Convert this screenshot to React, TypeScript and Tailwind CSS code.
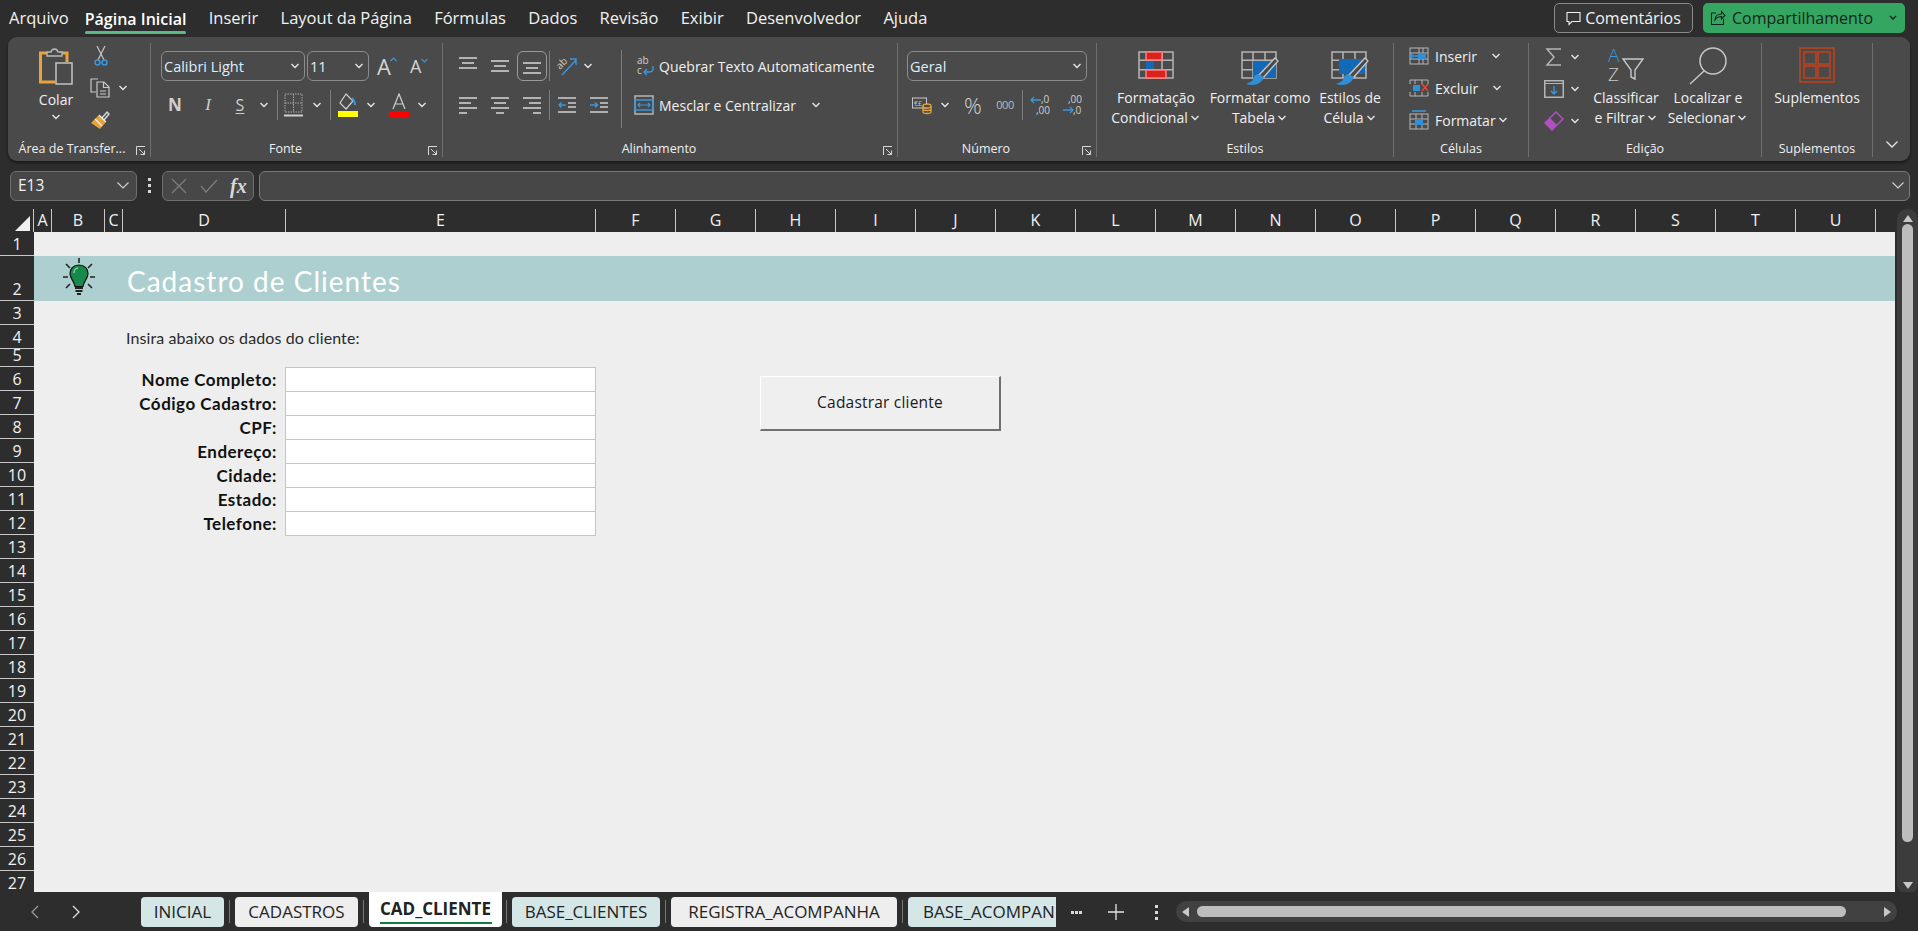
import type { ReactNode } from "react";

const UI = "font-['Open_Sans',sans-serif]";
const CELL = "font-['Lato',sans-serif]";

const menu = ["Arquivo", "Página Inicial", "Inserir", "Layout da Página", "Fórmulas", "Dados", "Revisão", "Exibir", "Desenvolvedor", "Ajuda"];

const columns = [
  { name: "A", w: "w-[18px]" },
  { name: "B", w: "w-[53px]" },
  { name: "C", w: "w-[18px]" },
  { name: "D", w: "w-[163px]" },
  { name: "E", w: "w-[310px]" },
  ...["F", "G", "H", "I", "J", "K", "L", "M", "N", "O", "P", "Q", "R", "S", "T", "U"].map((name) => ({ name, w: "w-[80px]" })),
];

const rows = [
  { n: 1, h: "h-[24px]" },
  { n: 2, h: "h-[45px]" },
  { n: 3, h: "h-[24px]" },
  { n: 4, h: "h-[24px]" },
  { n: 5, h: "h-[18px]" },
  ...Array.from({ length: 22 }, (_, i) => ({ n: i + 6, h: "h-[24px]" })),
];

const fields = ["Nome Completo:", "Código Cadastro:", "CPF:", "Endereço:", "Cidade:", "Estado:", "Telefone:"];

function Chev({ className = "" }: { className?: string }) {
  return (
    <svg width="12" height="8" viewBox="0 0 12 8" className={`shrink-0 ${className}`} fill="none" stroke="#e6e6e6" strokeWidth="1.4">
      <path d="M2.5 2 6 5.5 9.5 2" />
    </svg>
  );
}

function Launcher() {
  return (
    <svg width="10" height="10" viewBox="0 0 10 10" fill="none" stroke="#d8d8d8" strokeWidth="1">
      <path d="M.5 9V.5H9" />
      <path d="M3 3l5.5 5.5M8.5 4.5v4h-4" />
    </svg>
  );
}

function Sep({ className = "" }: { className?: string }) {
  return <div className={`h-[30px] w-px shrink-0 bg-[#7d7d7d] ${className}`} />;
}

function Group({ w, label, launcher, labelPad = "", children }: { w: string; label: string; launcher?: boolean; labelPad?: string; children: ReactNode }) {
  return (
    <div className={`flex h-[114px] shrink-0 flex-col border-r border-[#6f6f6f] ${w}`}>
      <div className="flex h-[99px]">{children}</div>
      <div className="flex h-[15px] items-center text-[12.5px] text-[#f0f0f0]">
        <span className={`flex-1 text-center whitespace-nowrap ${launcher ? "pr-[4px]" : ""} ${labelPad}`}>{label}</span>
        {launcher && (
          <span className="flex w-[18px] shrink-0 justify-center pt-[2px]">
            <Launcher />
          </span>
        )}
      </div>
    </div>
  );
}

function Combo({ w, ml, text }: { w: string; ml: string; text: string }) {
  return (
    <div className={`flex h-[30px] shrink-0 items-center justify-between rounded-md border border-[#8c8c8c] pl-[2px] pr-[3px] text-[14.5px] text-[#ddeeff] ${w} ${ml}`}>
      <span className="whitespace-nowrap pt-[1px]">{text}</span>
      <Chev />
    </div>
  );
}

function BigButton({ w, icon, top, lines, chev }: { w: string; icon: ReactNode; top: string; lines: string[]; chev?: boolean }) {
  return (
    <div className={`flex shrink-0 flex-col items-center text-[14px] leading-[20px] text-[#f0f0f0] ${w}`}>
      <div className={`flex h-[45px] w-full justify-center ${top}`}>{icon}</div>
      {lines.map((line, i) => (
        <div key={line} className="flex items-center whitespace-nowrap">
          {line}
          {chev && i === lines.length - 1 && <Chev className="ml-[1px]" />}
        </div>
      ))}
    </div>
  );
}

function AlignLines({ lines }: { lines: number[][] }) {
  return (
    <svg width="18" height="18" viewBox="0 0 18 18" stroke="#cfcfcf" strokeWidth="1.6" className="shrink-0">
      {lines.map(([x1, x2, y]) => (
        <line key={y} x1={x1} x2={x2} y1={y} y2={y} />
      ))}
    </svg>
  );
}

function Indent({ right }: { right?: boolean }) {
  return (
    <svg width="18" height="18" viewBox="0 0 18 18" fill="none" className="shrink-0">
      <path d="M0 2h18M0 16h18" stroke="#cfcfcf" strokeWidth="1.6" />
      <path d="M10 7h8M10 11h8" stroke="#cfcfcf" strokeWidth="1.6" />
      <path d={right ? "M0 9h7M5 6.5 7.5 9 5 11.5" : "M8 9H1M3.5 6.5 1 9l2.5 2.5"} stroke="#3a96dd" strokeWidth="1.5" />
    </svg>
  );
}

function GridBox({ children, w = 36, h = 28 }: { children?: ReactNode; w?: number; h?: number }) {
  const cw = w / 3;
  const ch = h / 3;
  return (
    <g fill="none" stroke="#b5b5b5" strokeWidth="1.5">
      <rect x="1" y="1" width={w - 2} height={h - 2} />
      <path d={`M${cw} 1V${h - 1}M${cw * 2} 1V${h - 1}M1 ${ch}H${w - 1}M1 ${ch * 2}H${w - 1}`} />
      {children}
    </g>
  );
}

function Brush() {
  return (
    <g>
      <path d="M18 24 34 7l3 3-15 17z" fill="#4a4a4a" stroke="#c8c8c8" strokeWidth="1.3" />
      <path d="M17 23c-5 1-4 5-6 7-2 1-6 3-6 3 7 2 15 1 18-7z" fill="#2f8fd8" />
    </g>
  );
}

function BulbIcon() {
  return (
    <svg width="32" height="40" viewBox="0 0 32 40" className="absolute left-[29px] top-[2px]">
      <path d="M16 0v5M3 6l4 4M29 6l-4 4M0 19h5M27 19h5M7 26l-4 4M25 26l4 4" stroke="#222" strokeWidth="1.6" />
      <path d="M16 7c-6 0-9 4-9 8.500 0 5 4 7 5 13h8c1-6 5-8 5-13C25 11 22 7 16 7z" fill="#168a4a" stroke="#111" strokeWidth="1.2" />
      <path d="M11 15c0-3 2-5 4-5" stroke="#8fd0a8" strokeWidth="1.4" fill="none" />
      <path d="M12 30h8M12.500 33h7M14 36h4" stroke="#222" strokeWidth="2" />
    </svg>
  );
}

function MenuBar() {
  return (
    <div className="flex h-[37px] items-start justify-between bg-[#2d2d2d] pr-[13px]">
      <div className="flex h-[37px] pl-[9px] text-[16.5px] text-[#f2f2f2]">
        {menu.map((item, i) => (
          <div key={item} className={`relative flex h-[37px] items-center whitespace-nowrap ${i === 0 ? "mr-[16px]" : "mr-[22.3px]"} ${i === 1 ? "text-[16px] font-semibold text-white" : ""}`}>
            {item}
            {i === 1 && <span className="absolute bottom-[3px] left-0 h-[3px] w-full rounded-sm bg-[#5fb784]" />}
          </div>
        ))}
      </div>
      <div className="flex gap-[10px] pt-[3px]">
        <div className="flex h-[30px] w-[139px] items-center justify-center gap-[4px] rounded-[5px] border border-[#8a8a8a] bg-[#363636] text-[16px] text-[#f2f2f2]">
          <svg width="15" height="15" viewBox="0 0 15 15" fill="none" stroke="#f0f0f0" strokeWidth="1.1">
            <path d="M1 1.500h13v9H6l-3 3v-3H1z" />
          </svg>
          Comentários
        </div>
        <div className="flex h-[30px] w-[202px] items-center justify-between rounded-[5px] bg-[#35a562] pl-[7px] pr-[6px] text-[16px] text-[#14251b]">
          <span className="flex items-center gap-[6px] whitespace-nowrap">
            <svg width="16" height="16" viewBox="0 0 16 16" fill="none" stroke="#14251b" strokeWidth="1.1">
              <path d="M6 3H1.500v11.500h12V9" />
              <path d="M5 10c0-4 3-6 6.500-6V1.500L15 5.500 11.500 9V6.500C9 6.500 6.500 7.500 5 10z" />
            </svg>
            Compartilhamento
          </span>
          <svg width="12" height="8" viewBox="0 0 12 8" fill="none" stroke="#14251b" strokeWidth="1.4">
            <path d="M3 2l3 3 3-3" />
          </svg>
        </div>
      </div>
    </div>
  );
}

function ClipboardGroup() {
  return (
    <Group w="w-[143px]" label="Área de Transfer..." labelPad="pl-[8px]" launcher>
      <div className="ml-[12px] flex w-[72px] flex-col items-center pt-[4px] text-[14px] text-[#f0f0f0]">
        <svg width="34" height="38" viewBox="0 0 34 38" fill="none">
          <path d="M8 6H1.500v29H16M21 6h7v9" stroke="#e8a33c" strokeWidth="3" />
          <path d="M8 9V5h4c1-4 6-4 7 0h4v4z" fill="#4a4a4a" stroke="#b9b9b9" strokeWidth="1.3" />
          <rect x="17" y="16" width="16" height="21" fill="#4a4a4a" stroke="#c4c4c4" strokeWidth="1.5" />
        </svg>
        <span className="mt-[5px] leading-[20px]">Colar</span>
        <Chev className="mt-[3px]" />
      </div>
      <div className="-ml-[2px] flex flex-col pt-[3px]">
        <svg width="14" height="20" viewBox="0 0 14 20" fill="none" className="ml-[4px]">
          <path d="M3 0l7 14M11 0 4 14" stroke="#c8c8c8" strokeWidth="1.2" />
          <circle cx="3.500" cy="16.500" r="2.500" stroke="#3a96dd" strokeWidth="1.5" />
          <circle cx="10.500" cy="16.500" r="2.500" stroke="#3a96dd" strokeWidth="1.5" />
        </svg>
        <div className="mt-[12px] flex items-center">
          <svg width="20" height="20" viewBox="0 0 20 20" fill="none" stroke="#c8c8c8" strokeWidth="1.2">
            <path d="M8 1H1v13h5" />
            <path d="M7 4h7l5 5v10H7z" fill="#4a4a4a" />
            <path d="M13.500 4v5.500H19M10 13h6M10 16h6" />
          </svg>
          <Chev className="ml-[7px]" />
        </div>
        <svg width="20" height="20" viewBox="0 0 20 20" fill="none" className="mt-[12px]">
          <path d="M12 8 17 2l2 2-5 6" stroke="#d8d8d8" strokeWidth="1.5" />
          <path d="M9 5l7 7-6 7-9-6z" fill="#e8a33c" />
          <path d="M9 5l7 7M5 9l7 7" stroke="#f0f0f0" strokeWidth="1.2" />
        </svg>
      </div>
    </Group>
  );
}

function FontGroup() {
  return (
    <Group w="w-[292px]" label="Fonte" launcher>
      <div className="flex flex-col pt-[8px]">
        <div className="flex h-[30px] items-center">
          <Combo w="w-[144px]" ml="ml-[10px]" text="Calibri Light" />
          <Combo w="w-[62px]" ml="ml-[2px]" text="11" />
          <span className="ml-[8px] flex w-[20px] items-start text-[22px] leading-none text-[#d4d4d4]">
            A
            <svg width="7" height="5" viewBox="0 0 7 5" fill="none" stroke="#3a96dd" strokeWidth="1.2" className="-ml-[1px] mt-[2px] shrink-0">
              <path d="M.5 4 3.500 1l3 3" />
            </svg>
          </span>
          <span className="ml-[13px] flex w-[19px] items-start text-[18px] leading-none text-[#d4d4d4]">
            A
            <svg width="7" height="5" viewBox="0 0 7 5" fill="none" stroke="#3a96dd" strokeWidth="1.2" className="mt-[1px] shrink-0">
              <path d="M.5 1l3 3 3-3" />
            </svg>
          </span>
        </div>
        <div className="mt-[9px] flex h-[30px] items-center text-[#cfcfcf]">
          <span className="ml-[14px] w-[20px] text-center text-[17px] font-bold">N</span>
          <span className="ml-[13px] w-[20px] text-center font-['Liberation_Serif',serif] text-[17px] italic">I</span>
          <span className="ml-[12px] w-[20px] text-center text-[16px] underline underline-offset-2">S</span>
          <Chev className="ml-[8px]" />
          <Sep className="ml-[7px]" />
          <svg width="19" height="24" viewBox="0 0 19 24" fill="none" className="ml-[6px] shrink-0" stroke="#a9a9a9" strokeDasharray="1.500 1">
            <rect x="1" y="1" width="17" height="18" />
            <path d="M9.500 1v18M1 10h17" />
            <path d="M0 22.500h19" stroke="#d0d0d0" strokeWidth="2" strokeDasharray="none" />
          </svg>
          <Chev className="ml-[8px]" />
          <Sep className="ml-[7px]" />
          <svg width="20" height="24" viewBox="0 0 20 24" fill="none" className="ml-[7px] shrink-0">
            <path d="M8 1 2 10l6 6 7-8z" stroke="#d0d0d0" strokeWidth="1.2" />
            <path d="M14 5c2 2 3 4 3 7" stroke="#3a96dd" strokeWidth="2" />
            <rect x="0" y="18" width="20" height="6" fill="#ffff00" />
          </svg>
          <Chev className="ml-[7px]" />
          <svg width="20" height="24" viewBox="0 0 20 24" fill="none" className="ml-[12px] shrink-0">
            <path d="M4 16 10 1l6 15M6 11h8" stroke="#d0d0d0" strokeWidth="1.2" />
            <rect x="0" y="18" width="20" height="6" fill="#ff0000" />
          </svg>
          <Chev className="ml-[7px]" />
        </div>
      </div>
    </Group>
  );
}

function AlignGroup() {
  return (
    <Group w="w-[455px]" label="Alinhamento" launcher>
      <div className="flex w-[178px] shrink-0 flex-col pt-[8px]">
        <div className="flex h-[30px] items-center">
          <div className="ml-[16px]">
            <AlignLines lines={[[0, 18, 1], [3, 15, 6], [0, 18, 11]]} />
          </div>
          <div className="ml-[14px]">
            <AlignLines lines={[[0, 18, 4], [3, 15, 9], [0, 18, 14]]} />
          </div>
          <div className="ml-[8px] flex h-[30px] w-[30px] items-center justify-center rounded-md border border-[#9a9a9a]">
            <AlignLines lines={[[0, 18, 6], [3, 15, 11], [0, 18, 16]]} />
          </div>
          <Sep className="ml-[2px]" />
          <svg width="21" height="22" viewBox="0 0 21 22" fill="none" className="ml-[7px] shrink-0">
            <text x="0" y="12" fontSize="10" fill="#cfcfcf" transform="rotate(-45 5 10)">ab</text>
            <path d="M5 20 19 5M13 4h6v6" stroke="#3a96dd" strokeWidth="1.4" />
          </svg>
          <Chev className="ml-[4px]" />
        </div>
        <div className="mt-[9px] flex h-[30px] items-center">
          <div className="ml-[16px]">
            <AlignLines lines={[[0, 18, 2], [0, 12, 7], [0, 18, 12], [0, 8, 17]]} />
          </div>
          <div className="ml-[14px]">
            <AlignLines lines={[[0, 18, 2], [3, 15, 7], [0, 18, 12], [5, 13, 17]]} />
          </div>
          <div className="ml-[14px]">
            <AlignLines lines={[[0, 18, 2], [6, 18, 7], [0, 18, 12], [10, 18, 17]]} />
          </div>
          <Sep className="ml-[8px]" />
          <div className="ml-[8px]">
            <Indent />
          </div>
          <div className="ml-[14px]">
            <Indent right />
          </div>
        </div>
      </div>
      <div className="mt-[7px] h-[78px] w-px shrink-0 bg-[#7d7d7d]" />
      <div className="flex flex-col pt-[8px] text-[14px] text-[#f0f0f0]">
        <div className="flex h-[30px] items-center whitespace-nowrap">
          <svg width="18" height="22" viewBox="0 0 18 22" fill="none" className="ml-[15px] shrink-0">
            <text x="0" y="9" fontSize="10" fill="#cfcfcf">ab</text>
            <text x="0" y="19" fontSize="10" fill="#cfcfcf">c</text>
            <path d="M16 11v3c0 2-2 3-4 3H7M10 14l-3 3 3 3" stroke="#3a96dd" strokeWidth="1.4" />
          </svg>
          <span className="ml-[4px]">Quebrar Texto Automaticamente</span>
        </div>
        <div className="mt-[9px] flex h-[30px] items-center whitespace-nowrap">
          <svg width="20" height="20" viewBox="0 0 20 20" fill="none" className="ml-[12px] shrink-0">
            <rect x="1" y="1" width="18" height="18" stroke="#b5b5b5" strokeWidth="1.5" />
            <rect x="1" y="5" width="18" height="10" stroke="#3a96dd" strokeWidth="1.5" />
            <path d="M4 10h12M6 8l-2 2 2 2M14 8l2 2-2 2" stroke="#3a96dd" strokeWidth="1.2" />
          </svg>
          <span className="ml-[5px] pt-[1px]">Mesclar e Centralizar</span>
          <Chev className="ml-[14px]" />
        </div>
      </div>
    </Group>
  );
}

function NumberGroup() {
  return (
    <Group w="w-[199px]" label="Número" launcher>
      <div className="flex flex-col pt-[8px]">
        <div className="flex h-[30px] items-center">
          <Combo w="w-[180px]" ml="ml-[9px]" text="Geral" />
        </div>
        <div className="mt-[9px] flex h-[30px] items-center text-[#cfcfcf]">
          <svg width="20" height="20" viewBox="0 0 20 20" fill="none" className="ml-[14px] shrink-0">
            <rect x="0.500" y="3" width="14" height="10" stroke="#c8c8c8" />
            <text x="2" y="11" fontSize="7" fill="#c8c8c8">€£</text>
            <ellipse cx="15" cy="11" rx="4" ry="2" stroke="#e8a33c" fill="#4a4a4a" strokeWidth="1.3" />
            <path d="M11 11v6c0 2 8 2 8 0v-6M11 14c0 2 8 2 8 0" stroke="#e8a33c" strokeWidth="1.3" />
          </svg>
          <Chev className="ml-[7px]" />
          <span className="ml-[12px] w-[20px] text-center text-[22px] font-light leading-none">%</span>
          <span className="ml-[12px] w-[20px] text-center text-[11px] tracking-[-0.5px] text-[#bcbcbc]">000</span>
          <Sep className="ml-[7px]" />
          <svg width="20" height="22" viewBox="0 0 20 22" fill="none" className="ml-[7px] shrink-0">
            <text x="11" y="9" fontSize="10" fill="#cfcfcf">,0</text>
            <text x="6" y="20" fontSize="10" fill="#cfcfcf">,00</text>
            <path d="M11 6H1M4 3 1 6l3 3" stroke="#3a96dd" strokeWidth="1.3" />
          </svg>
          <svg width="20" height="22" viewBox="0 0 20 22" fill="none" className="ml-[12px] shrink-0">
            <text x="6" y="9" fontSize="10" fill="#cfcfcf">,00</text>
            <text x="11" y="20" fontSize="10" fill="#cfcfcf">,0</text>
            <path d="M1 16h10M8 13l3 3-3 3" stroke="#3a96dd" strokeWidth="1.3" />
          </svg>
        </div>
      </div>
    </Group>
  );
}

function StylesGroup() {
  return (
    <Group w="w-[297px]" label="Estilos">
      <div className="ml-[7px] flex">
        <BigButton
          w="w-[104px]"
          top="pt-[8px]"
          lines={["Formatação", "Condicional"]}
          chev
          icon={
            <svg width="36" height="28" viewBox="0 0 36 28">
              <GridBox>
                <rect x="8" y="1" width="16" height="8" fill="#d8231c" stroke="#ff7f7f" />
                <rect x="8" y="10" width="8" height="8" fill="#1269b8" stroke="none" />
                <rect x="8" y="19" width="20" height="8" fill="#d8231c" stroke="#ff7f7f" />
              </GridBox>
            </svg>
          }
        />
        <BigButton
          w="w-[104px]"
          top="pt-[8px]"
          lines={["Formatar como", "Tabela"]}
          chev
          icon={
            <svg width="38" height="34" viewBox="0 0 38 34">
              <GridBox>
                <rect x="12" y="10" width="23" height="17" fill="#1269b8" stroke="none" />
              </GridBox>
              <Brush />
            </svg>
          }
        />
        <BigButton
          w="w-[76px]"
          top="pt-[8px]"
          lines={["Estilos de", "Célula"]}
          chev
          icon={
            <svg width="38" height="34" viewBox="0 0 38 34">
              <GridBox>
                <rect x="8" y="8" width="26" height="15" fill="#1269b8" stroke="none" />
              </GridBox>
              <Brush />
            </svg>
          }
        />
      </div>
    </Group>
  );
}

function CellsGroup() {
  return (
    <Group w="w-[135px]" label="Células">
      <div className="flex flex-col pl-[15px] text-[14px] text-[#f0f0f0]">
        <div className="-mt-[1px] flex h-[28px] items-center">
          <svg width="20" height="18" viewBox="0 0 20 18" fill="none" className="shrink-0">
            <rect x="1" y="1" width="18" height="16" stroke="#b5b5b5" />
            <path d="M10 1v16M14 1v16M1 6h18M1 12h18" stroke="#b5b5b5" />
            <rect x="9" y="6" width="8" height="6" fill="#2f8fd8" />
            <path d="M9 9H1M4 6 1 9l3 3" stroke="#3a96dd" strokeWidth="1.4" />
          </svg>
          <span className="ml-[6px]">Inserir</span>
          <Chev className="ml-[13px]" />
        </div>
        <div className="mt-[4px] flex h-[28px] items-center">
          <svg width="20" height="18" viewBox="0 0 20 18" fill="none" className="shrink-0">
            <path d="M1 5V1h18v4M1 13v4h18v-4M6 1v4M13 1v4M6 13v4M13 13v4" stroke="#b5b5b5" />
            <rect x="4" y="6" width="7" height="6" fill="#2f8fd8" />
            <path d="M13 5l6 7M19 5l-6 7" stroke="#e8473f" strokeWidth="1.4" />
          </svg>
          <span className="ml-[6px]">Excluir</span>
          <Chev className="ml-[13px]" />
        </div>
        <div className="mt-[4px] flex h-[28px] items-center">
          <svg width="20" height="20" viewBox="0 0 20 20" fill="none" className="shrink-0">
            <rect x="1" y="4" width="18" height="15" stroke="#b5b5b5" />
            <path d="M7 4v15M13 4v15M1 9h18M1 14h18" stroke="#b5b5b5" />
            <rect x="6" y="9" width="8" height="6" fill="#2f8fd8" />
            <path d="M3 1h14" stroke="#3a96dd" strokeWidth="1.6" />
          </svg>
          <span className="ml-[6px]">Formatar</span>
          <Chev className="ml-[1px]" />
        </div>
      </div>
    </Group>
  );
}

function EditGroup() {
  return (
    <Group w="w-[233px]" label="Edição">
      <div className="flex w-[57px] shrink-0 flex-col pl-[15px]">
        <div className="flex h-[28px] items-center">
          <svg width="20" height="18" viewBox="0 0 20 18" fill="none" className="shrink-0">
            <path d="M17 1H3l7 8-7 8h14" stroke="#b5b5b5" strokeWidth="1.5" />
          </svg>
          <Chev className="ml-[5px]" />
        </div>
        <div className="mt-[4px] flex h-[28px] items-center">
          <svg width="20" height="18" viewBox="0 0 20 18" fill="none" className="shrink-0">
            <rect x="0.750" y="0.750" width="18.500" height="16.500" stroke="#b5b5b5" strokeWidth="1.500" />
            <path d="M1 3.500h18" stroke="#b5b5b5" />
            <path d="M10 6v8M7 11l3 3 3-3" stroke="#3a96dd" strokeWidth="1.4" />
          </svg>
          <Chev className="ml-[5px]" />
        </div>
        <div className="mt-[4px] flex h-[28px] items-center">
          <svg width="20" height="20" viewBox="0 0 20 20" fill="none" className="shrink-0">
            <path d="M1 12 12 1l7 7L8 19z" stroke="#b04fc0" strokeWidth="1.5" />
            <path d="M1 12l5-5 7 7-5 5z" fill="#b04fc0" />
          </svg>
          <Chev className="ml-[5px]" />
        </div>
      </div>
      <BigButton
        w="w-[80px]"
        top="pt-[4px]"
        lines={["Classificar", "e Filtrar"]}
        chev
        icon={
          <svg width="36" height="36" viewBox="0 0 36 36" fill="none">
            <text x="0" y="15" fontSize="19" fill="#3a96dd" fontWeight="300">A</text>
            <text x="0" y="34" fontSize="19" fill="#c8c8c8" fontWeight="300">Z</text>
            <path d="M15 12h20l-8 11v9l-4-2v-7z" stroke="#c8c8c8" strokeWidth="1.4" />
          </svg>
        }
      />
      <BigButton
        w="w-[84px]"
        top="pt-[4px]"
        lines={["Localizar e", "Selecionar"]}
        chev
        icon={
          <svg width="38" height="38" viewBox="0 0 38 38" fill="none" stroke="#c8c8c8" strokeWidth="1.5">
            <circle cx="24" cy="14" r="13" />
            <path d="M15 24 1 37" />
          </svg>
        }
      />
    </Group>
  );
}

function AddinsGroup() {
  return (
    <Group w="w-[111px]" label="Suplementos">
      <BigButton
        w="w-full"
        top="pt-[4px]"
        lines={["Suplementos"]}
        icon={
          <svg width="36" height="36" viewBox="0 0 36 36" fill="none" stroke="#c4421a" strokeWidth="1.500">
            <rect x="1" y="1" width="34" height="34" />
            <rect x="5" y="5" width="12" height="12" />
            <rect x="19" y="5" width="12" height="12" />
            <rect x="5" y="19" width="12" height="12" />
            <rect x="19" y="19" width="12" height="12" />
          </svg>
        }
      />
    </Group>
  );
}

function Ribbon() {
  return (
    <div className="mx-[8px] flex h-[124px] rounded-[9px] bg-[#4a4a4a] pt-[6px] shadow-[0_2px_3px_rgba(0,0,0,0.45)]">
      <ClipboardGroup />
      <FontGroup />
      <AlignGroup />
      <NumberGroup />
      <StylesGroup />
      <CellsGroup />
      <EditGroup />
      <AddinsGroup />
      <div className="flex flex-1 items-end justify-center pb-[12px]">
        <svg width="14" height="9" viewBox="0 0 14 9" fill="none" stroke="#e6e6e6" strokeWidth="1.3">
          <path d="M1.500 1.500 7 7l5.500-5.500" />
        </svg>
      </div>
    </div>
  );
}

function FormulaBar() {
  return (
    <div className="flex h-[48px] items-start px-[10px] pr-[8px] pt-[10px]">
      <div className="flex h-[30px] w-[127px] items-center justify-between rounded-md border border-[#6f6f6f] bg-[#474747] pl-[7px] pr-[6px] text-[15.5px] text-[#f2f2f2]">
        E13
        <svg width="14" height="9" viewBox="0 0 14 9" fill="none" stroke="#d0d0d0" strokeWidth="1.2">
          <path d="M1.500 1.500 7 7l5.500-5.500" />
        </svg>
      </div>
      <div className="flex h-[30px] w-[25px] flex-col items-center justify-center gap-[3px]">
        <span className="h-[3px] w-[3px] bg-[#d8d8d8]" />
        <span className="h-[3px] w-[3px] bg-[#d8d8d8]" />
        <span className="h-[3px] w-[3px] bg-[#d8d8d8]" />
      </div>
      <div className="flex h-[30px] w-[92px] items-center rounded-md border border-[#6f6f6f] bg-[#474747] pl-[8px]">
        <svg width="16" height="16" viewBox="0 0 16 16" stroke="#7d7d7d" strokeWidth="1.3">
          <path d="M1 1l14 14M15 1 1 15" />
        </svg>
        <svg width="18" height="14" viewBox="0 0 18 14" fill="none" stroke="#7d7d7d" strokeWidth="1.3" className="ml-[13px]">
          <path d="M1 7l5 6L17 1" />
        </svg>
        <span className="ml-[12px] font-['Liberation_Serif',serif] text-[20px] font-bold italic text-[#d8d8d8]">fx</span>
      </div>
      <div className="ml-[5px] flex h-[30px] flex-1 items-center justify-end rounded-md border border-[#7a7a7a] bg-[#474747] pr-[4px]">
        <svg width="14" height="9" viewBox="0 0 14 9" fill="none" stroke="#d0d0d0" strokeWidth="1.2">
          <path d="M1.500 1.500 7 7l5.500-5.500" />
        </svg>
      </div>
    </div>
  );
}

function ColumnHeader() {
  return (
    <div className="flex h-[23px] shrink-0 text-[16px] text-[#f2f2f2]">
      <div className="relative w-[34px] shrink-0 border-r border-[#c8c8c8]">
        <div className="absolute bottom-[1px] right-[3px] h-0 w-0 border-b-[15px] border-l-[15px] border-b-[#f0f0f0] border-l-transparent" />
      </div>
      {columns.map((c) => (
        <div key={c.name} className={`flex shrink-0 items-center justify-center border-r border-[#c8c8c8] ${c.w}`}>
          {c.name}
        </div>
      ))}
    </div>
  );
}

function Sheet() {
  return (
    <div className={`relative flex-1 bg-[#eeeeee] ${CELL}`}>
      <div className="h-[24px]" />
      <div className="relative flex h-[45px] items-center bg-[#aecfcf] pl-[93px] pt-[6px] text-[28px] tracking-[1px] text-white">
        <BulbIcon />
        Cadastro de Clientes
      </div>
      <div className="h-[24px]" />
      <div className="flex h-[24px] items-center pl-[92px] pt-[2px] text-[16px] tracking-[0.1px] text-[#2a2a2a]">Insira abaixo os dados do cliente:</div>
      <div className="h-[18px]" />
      <div className="w-[562px]">
        {fields.map((f) => (
          <div key={f} className="flex h-[24px]">
            <div className="flex w-[243px] shrink-0 items-end justify-end text-[17px] font-bold leading-[23px] tracking-[0.5px] text-[#111]">{f}</div>
            <div className="ml-[8px] h-[25px] w-[311px] shrink-0 border border-[#aecfcf] bg-white" />
          </div>
        ))}
      </div>
      <div className={`absolute left-[726px] top-[144px] flex h-[55px] w-[241px] items-center justify-center border-b-2 border-l border-r-2 border-t border-b-[#707070] border-l-white border-r-[#707070] border-t-white bg-[#efefef] text-[15.5px] tracking-[0.2px] text-[#1a1a1a] ${UI}`}>
        Cadastrar cliente
      </div>
    </div>
  );
}

function RowHeader() {
  return (
    <div className="w-[34px] shrink-0 text-[16px] text-[#f2f2f2]">
      {rows.map((r) => (
        <div key={r.n} className={`flex items-end justify-center overflow-hidden border-b border-[#c8c8c8] leading-[21px] ${r.h}`}>
          {r.n}
        </div>
      ))}
    </div>
  );
}

function VScroll() {
  return (
    <div className="ml-[2px] flex h-[685px] w-[21px] flex-col items-center rounded-full bg-[#3c3c3c] pb-[5px] pt-[6px]">
      <div className="h-0 w-0 border-b-[7px] border-l-[5px] border-r-[5px] border-b-[#c8c8c8] border-l-transparent border-r-transparent" />
      <div className="mt-[2px] h-[618px] w-[11px] rounded-full bg-[#bdbdbd]" />
      <div className="mt-auto h-0 w-0 border-l-[5px] border-r-[5px] border-t-[7px] border-l-transparent border-r-transparent border-t-[#c8c8c8]" />
    </div>
  );
}

function SheetTab({ label, w, ml, color, active }: { label: string; w: string; ml: string; color?: string; active?: boolean }) {
  if (active) {
    return (
      <div className={`flex h-[35px] shrink-0 flex-col items-center rounded-b-[4px] bg-white pt-[6px] text-[17px] font-bold leading-[22px] text-[#222] ${w} ${ml}`}>
        {label}
        <span className="mt-[2px] h-[2px] w-[112px] bg-[#107c41]" />
      </div>
    );
  }
  return (
    <div className={`mt-[5px] flex h-[30px] shrink-0 items-center justify-center overflow-hidden rounded-[4px] text-[17px] text-[#222] ${w} ${ml} ${color}`}>
      {label}
    </div>
  );
}

function TabBar() {
  return (
    <div className="flex h-[39px] shrink-0 items-start bg-[#2d2d2d]">
      <div className="flex h-[35px] w-[141px] shrink-0 items-center pl-[31px] pt-[4px]">
        <svg width="8" height="14" viewBox="0 0 8 14" fill="none" stroke="#9a9a9a" strokeWidth="1.3">
          <path d="M7 1 1 7l6 6" />
        </svg>
        <svg width="8" height="14" viewBox="0 0 8 14" fill="none" stroke="#e0e0e0" strokeWidth="1.3" className="ml-[33px]">
          <path d="M1 1l6 6-6 6" />
        </svg>
      </div>
      <SheetTab label="INICIAL" w="w-[83px]" ml="ml-0" color="bg-[#d4e6e6]" />
      <div className="ml-[5px] mt-[8px] h-[23px] w-px shrink-0 bg-[#777]" />
      <SheetTab label="CADASTROS" w="w-[123px]" ml="ml-[5px]" color="bg-[#eeeeee]" />
      <div className="ml-[5px] mt-[8px] h-[23px] w-px shrink-0 bg-[#777]" />
      <SheetTab label="CAD_CLIENTE" w="w-[133px]" ml="ml-[5px]" active />
      <div className="ml-[4px] mt-[8px] h-[23px] w-px shrink-0 bg-[#777]" />
      <SheetTab label="BASE_CLIENTES" w="w-[148px]" ml="ml-[5px]" color="bg-[#d4e6e6]" />
      <div className="ml-[5px] mt-[8px] h-[23px] w-px shrink-0 bg-[#777]" />
      <SheetTab label="REGISTRA_ACOMPANHA" w="w-[226px]" ml="ml-[5px]" color="bg-[#eeeeee]" />
      <div className="ml-[5px] mt-[8px] h-[23px] w-px shrink-0 bg-[#777]" />
      <div className="ml-[5px] mt-[5px] flex h-[30px] w-[148px] shrink-0 items-center overflow-hidden rounded-l-[4px] bg-[#d4e6e6] pl-[15px] text-[17px] whitespace-nowrap text-[#222]">
        BASE_ACOMPANHAMENTO
      </div>
      <div className="flex h-[30px] w-[40px] shrink-0 translate-y-[5px] items-center justify-center gap-[1px]">
        <span className="h-[3px] w-[3px] bg-[#d8d8d8]" />
        <span className="h-[3px] w-[3px] bg-[#d8d8d8]" />
        <span className="h-[3px] w-[3px] bg-[#d8d8d8]" />
      </div>
      <div className="flex h-[30px] w-[40px] shrink-0 translate-y-[5px] items-center justify-center">
        <svg width="16" height="16" viewBox="0 0 16 16" stroke="#e6e6e6" strokeWidth="1.300">
          <path d="M8 0v16M0 8h16" />
        </svg>
      </div>
      <div className="flex h-[30px] w-[40px] shrink-0 translate-y-[5px] flex-col items-center justify-center gap-[3px]">
        <span className="h-[3px] w-[3px] bg-[#d8d8d8]" />
        <span className="h-[3px] w-[3px] bg-[#d8d8d8]" />
        <span className="h-[3px] w-[3px] bg-[#d8d8d8]" />
      </div>
      <div className="mt-[9px] flex h-[21px] w-[721px] shrink-0 items-center rounded-full bg-[#414141] px-[6px]">
        <div className="h-0 w-0 border-b-[5px] border-r-[7px] border-t-[5px] border-b-transparent border-r-[#c8c8c8] border-t-transparent" />
        <div className="ml-[8px] h-[11px] w-[649px] rounded-full bg-[#bdbdbd]" />
        <div className="ml-auto h-0 w-0 border-b-[5px] border-l-[7px] border-t-[5px] border-b-transparent border-l-[#c8c8c8] border-t-transparent" />
      </div>
    </div>
  );
}

export default function App() {
  return (
    <div className={`flex h-[931px] w-[1918px] flex-col overflow-hidden bg-[#2d2d2d] ${UI}`}>
      <MenuBar />
      <Ribbon />
      <FormulaBar />
      <div className="flex h-[685px] overflow-hidden">
        <div className="flex h-[683px] w-[1895px] shrink-0 flex-col overflow-hidden">
          <ColumnHeader />
          <div className="flex flex-1 overflow-hidden">
            <RowHeader />
            <Sheet />
          </div>
        </div>
        <VScroll />
      </div>
      <TabBar />
    </div>
  );
}
